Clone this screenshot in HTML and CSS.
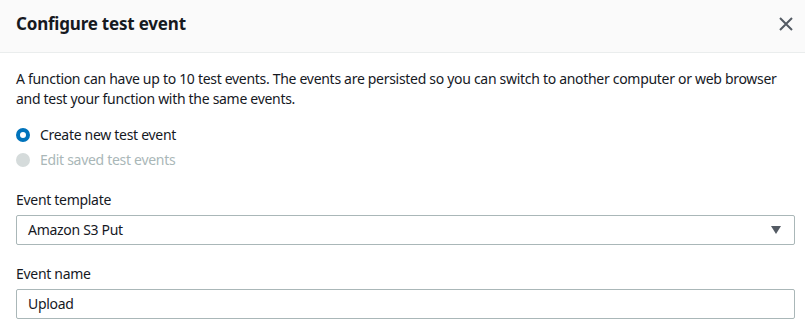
FILE: index.html
```html
<!DOCTYPE html>
<html lang="en">
<head>
  <meta charset="UTF-8">
  <meta name="viewport" content="width=device-width, initial-scale=1.0">
  <title>Configure test event</title>
  <link rel="stylesheet" href="styles.css">
</head>
<body>
  <div class="modal">
    <div class="modal-header">
      <h1>Configure test event</h1>
      <button class="close-button" aria-label="Close">
        <svg width="14" height="14" viewBox="0 0 14 14">
          <path d="M1 1 L13 13 M13 1 L1 13" stroke="#545b64" stroke-width="2" fill="none"/>
        </svg>
      </button>
    </div>
    <div class="modal-body">
      <p class="intro">A function can have up to 10 test events. The events are persisted so you can switch to another computer or web browser and test your function with the same events.</p>

      <div class="radio-group">
        <label class="radio">
          <span class="radio-dot checked"></span>
          Create new test event
        </label>
        <label class="radio disabled">
          <span class="radio-dot"></span>
          Edit saved test events
        </label>
      </div>

      <div class="field">
        <label class="field-label">Event template</label>
        <div class="select">
          <span>Amazon S3 Put</span>
          <svg width="12" height="10" viewBox="0 0 12 10">
            <path d="M1 1 L11 1 L6 9 Z" fill="#545b64"/>
          </svg>
        </div>
      </div>

      <div class="field">
        <label class="field-label">Event name</label>
        <div class="input">Upload</div>
      </div>
    </div>
  </div>
</body>
</html>
```

FILE: styles.css
```css
body {
  font-family: "Noto Sans", "Open Sans", sans-serif;
  font-size: 14px;
  line-height: 20px;
  letter-spacing: -0.3px;
  color: #16191f;
  background-color: #ffffff;
  margin: 0;
}
.modal-header {
  display: flex;
  align-items: center;
  justify-content: space-between;
  height: 48px;
  padding: 0 12px 4px 16px;
  background-color: #fafafa;
  border-bottom: 1px solid #eaeded;
}
.modal-header h1 {
  margin: 0;
  font-size: 17px;
  font-weight: 700;
  line-height: 24px;
  letter-spacing: -0.2px;
}
.close-button {
  display: flex;
  padding: 0;
  border: none;
  background: none;
  cursor: pointer;
}
.modal-body {
  padding: 16px 10px 0 16px;
}
.intro {
  margin: 0 0 16px;
}
.radio-group {
  display: flex;
  flex-direction: column;
  gap: 5px;
}
.radio {
  display: flex;
  align-items: center;
  gap: 10px;
}
.radio.disabled {
  color: #aab7b8;
}
.radio-dot {
  box-sizing: border-box;
  width: 14px;
  height: 14px;
  border-radius: 50%;
  background-color: #d5dbdb;
}
.radio-dot.checked {
  background-color: #ffffff;
  border: 4px solid #0073bb;
}
.field {
  margin-top: 20px;
}
.field-label {
  display: block;
  margin-bottom: 5px;
}
.select,
.input {
  box-sizing: border-box;
  display: flex;
  align-items: center;
  height: 30px;
  padding: 0 12px 0 11px;
  border: 1px solid #aab7b8;
  border-radius: 2px;
  background-color: #ffffff;
}
.select {
  justify-content: space-between;
}
.field + .field {
  margin-top: 19px;
}
```
